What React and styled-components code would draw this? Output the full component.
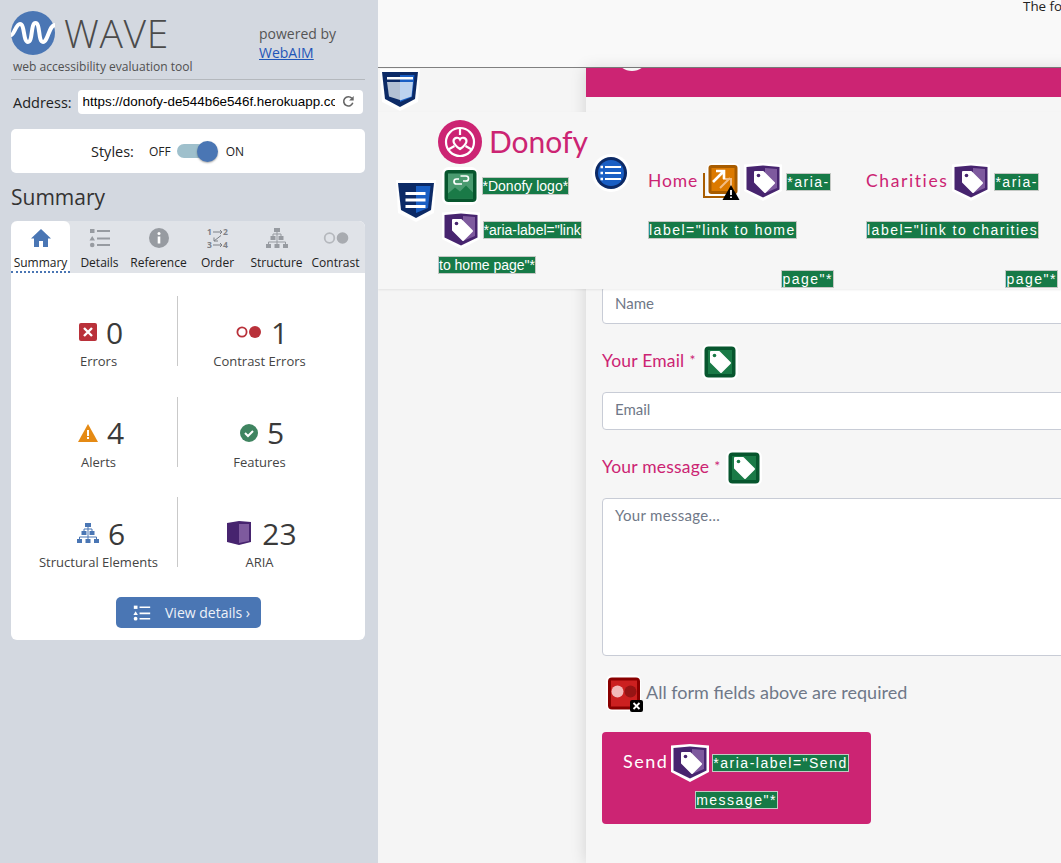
import React from "react";
import styled, { createGlobalStyle } from "styled-components";

const GlobalStyle = createGlobalStyle`
  html, body { margin: 0; padding: 0; height: 100%; overflow: hidden; }
  body { font-family: "Open Sans", sans-serif; background: #f5f5f5; }
  * { box-sizing: border-box; }
`;

const Page = styled.div`
  display: flex;
  width: 1061px;
  height: 863px;
  overflow: hidden;
`;

/* ---------- sidebar ---------- */
const Sidebar = styled.aside`
  width: 378px;
  flex: none;
  background: #d3d8e0;
  padding: 11px 13px 0 11px;
  color: #3c3c3c;
`;
const Head = styled.div`
  display: flex;
  height: 69px;
  border-bottom: 1px solid #b4b8bd;
`;
const Brand = styled.div`
  width: 248px;
`;
const LogoRow = styled.div`
  display: flex;
  align-items: center;
  gap: 9px;
  height: 44px;
`;
const WaveWord = styled.span`
  font-size: 39px;
  font-weight: 300;
  line-height: 46px;
  color: #4b4b4b;
  letter-spacing: 0.7px;
`;
const Tagline = styled.div`
  font-size: 12.05px;
  line-height: 17px;
  margin: 3px 0 0 2px;
  color: #505050;
  white-space: nowrap;
`;
const Powered = styled.div`
  font-size: 14px;
  line-height: 19px;
  padding-top: 13px;
  color: #555;
`;
const WebLink = styled.a`
  display: block;
  color: #1f55b8;
  text-decoration: underline;
`;
const AddressRow = styled.div`
  display: flex;
  align-items: center;
  height: 24px;
  margin-top: 10px;
  padding-left: 2px;
  font-size: 14.5px;
  color: #222;
`;
const AddressBox = styled.div`
  margin-left: 6px;
  width: 285px;
  height: 24px;
  background: #fff;
  border-radius: 4px;
  padding: 0 8px 2px 5px;
  display: flex;
  align-items: center;
  justify-content: space-between;
  font-family: "Liberation Sans", sans-serif;
  font-size: 13.4px;
  color: #000;
`;
const AddressText = styled.span`
  width: 252px;
  overflow: hidden;
  white-space: nowrap;
`;
const StylesBox = styled.div`
  height: 44px;
  margin-top: 15px;
  background: #fff;
  border-radius: 5px;
  display: flex;
  align-items: center;
  padding-left: 80px;
  color: #222;
  font-size: 14.5px;
`;
const SmallLabel = styled.span`
  font-size: 12px;
  margin-left: ${(p) => p.$left}px;
`;
const Track = styled.div`
  position: relative;
  width: 28px;
  height: 14px;
  margin-left: 6px;
  background: #9fc0cc;
  border-radius: 7px;
`;
const Knob = styled.div`
  position: absolute;
  left: 20px;
  top: -3.5px;
  width: 21px;
  height: 21px;
  border-radius: 50%;
  background: #4a76b4;
  box-shadow: 0 1px 2px rgba(0, 0, 0, 0.35);
`;
const SummaryTitle = styled.h2`
  margin: 10px 0 9px;
  font-size: 21px;
  line-height: 29px;
  font-weight: 400;
  color: #333;
`;
const Panel = styled.section`
  height: 419px;
  background: #fff;
  border-radius: 6px;
  overflow: hidden;
`;
const Tabs = styled.div`
  display: grid;
  grid-template-columns: repeat(6, 59px);
  height: 52px;
  background: #e0e3e8;
`;
const Tab = styled.div`
  display: flex;
  flex-direction: column;
  align-items: center;
  padding-top: 5px;
  height: 52px;
  font-size: 12px;
  white-space: nowrap;
  color: #222;
  background: ${(p) => (p.$active ? "#fff" : "transparent")};
  border-radius: ${(p) => (p.$active ? "6px 6px 0 0" : "0")};
  border-bottom: ${(p) => (p.$active ? "2px dotted #4a76b4" : "none")};
  svg { height: 24px; flex: none; }
  span { margin-top: 5px; line-height: 16px; }
`;
const Stats = styled.div`
  display: grid;
  grid-template-columns: 167px 1fr;
  grid-auto-rows: 70px;
  row-gap: 30.5px;
  margin: 23px 24px 0 0;
`;
const Stat = styled.div`
  display: flex;
  flex-direction: column;
  align-items: center;
  justify-content: flex-end;
  padding-left: ${(p) => (p.$first ? "9px" : "0")};
  border-right: ${(p) => (p.$first ? "1px solid #c9c9c9" : "none")};
`;
const StatTop = styled.div`
  display: flex;
  align-items: center;
  gap: ${(p) => p.$gap || 9}px;
  height: 36px;
  padding-left: 5px;
  font-size: 30px;
  color: #3a3a3a;
`;
const StatLabel = styled.div`
  font-size: 13px;
  line-height: 17px;
  margin-bottom: -4px;
  margin-top: 3px;
  color: #444;
  white-space: nowrap;
`;
const DetailsButton = styled.div`
  display: flex;
  align-items: center;
  width: 145px;
  height: 31px;
  margin: 30px 0 0 105px;
  padding-left: 17px;
  gap: 14px;
  background: #4a76b4;
  border-radius: 5px;
  color: #eef2f8;
  font-size: 14px;
  white-space: nowrap;
`;

/* ---------- page under test ---------- */
const Main = styled.main`
  position: relative;
  flex: 1;
  min-width: 0;
  overflow: hidden;
  background: #f5f5f5;
`;
const TopBar = styled.div`
  height: 68px;
  background: #f9f9f9;
  border-bottom: 1px solid #808080;
  padding-left: 645px;
  font-size: 13.4px;
  line-height: 13px;
  white-space: nowrap;
  color: #222;
`;
const Card = styled.div`
  margin-left: 208px;
  width: 700px;
  min-height: 795px;
  background: #f6f6f6;
  box-shadow: -1px 0 14px rgba(0, 0, 0, 0.13);
`;
const PinkBar = styled.div`
  position: relative;
  height: 29px;
  background: #cc2473;
  overflow: hidden;
`;
const BarDot = styled.div`
  position: absolute;
  left: 32px;
  top: -19px;
  width: 28px;
  height: 22px;
  border-radius: 50%;
  background: #f6f6f6;
`;
const Form = styled.div`
  padding: 141px 0 0 16px;
  font-family: Lato, sans-serif;
`;
const LabelRow = styled.div`
  display: flex;
  align-items: center;
  gap: 6px;
  height: 36px;
  margin-bottom: 12px;
  font-size: 17.5px;
  letter-spacing: 0.2px;
  color: #cc2473;
  em { font-style: normal; padding-bottom: 4px; }
  sup { font-size: 14px; margin: -5px 0 0 -1px; }
`;
const Input = styled.div`
  width: 640px;
  height: ${(p) => p.$height || 38}px;
  margin-bottom: 20px;
  padding: ${(p) => (p.$area ? "7px 12px" : "0 12px 4px")};
  display: flex;
  align-items: ${(p) => (p.$area ? "flex-start" : "center")};
  background: #fff;
  border: 1px solid #c8ccd6;
  border-radius: 4px;
  font-size: 15px;
  letter-spacing: ${(p) => (p.$area ? "0.3px" : "0")};
  color: #6f7888;
`;
const RequiredRow = styled.div`
  display: flex;
  align-items: center;
  gap: 2px;
  height: 36px;
  margin: 0 0 20px 4px;
  font-size: 18px;
  color: #6f7888;
  em { font-style: normal; padding-bottom: 4px; }
`;
const SendButton = styled.div`
  width: 269px;
  height: 92px;
  background: #cc2473;
  border-radius: 4px;
  color: #fff;
  font-size: 18px;
  letter-spacing: 1.5px;
  padding-top: 12px;
  em { font-style: normal; padding-bottom: 4px; }
`;
const SendTop = styled.div`
  display: flex;
  align-items: center;
  gap: 3px;
  padding-left: 21px;
  height: 38px;
`;
const SendBottom = styled.div`
  margin-top: 9px;
  text-align: center;
  line-height: 0;
`;

/* overlays from the misplaced nav */
const StrayShield = styled.div`
  position: absolute;
  left: 2px;
  top: 69px;
  line-height: 0;
`;
const Nav = styled.nav`
  position: absolute;
  left: 0;
  right: 0;
  top: 112px;
  height: 177px;
  display: flex;
  background: #f6f6f6;
  box-shadow: 0 1px 2px rgba(0, 0, 0, 0.08);
  font-family: Lato, sans-serif;
`;
const NavShield = styled.div`
  margin: 68px 0 0 18px;
  line-height: 0;
`;
const BrandCol = styled.div`
  width: 154px;
  flex: none;
  margin-left: 2px;
  padding-top: 8px;
`;
const DonofyRow = styled.div`
  display: flex;
  align-items: center;
  gap: 7px;
  height: 44px;
`;
const DonofyWord = styled.span`
  font-size: 30px;
  line-height: 42px;
  padding-bottom: 2px;
  color: #cc2473;
`;
const BrandLine = styled.div`
  display: flex;
  align-items: center;
  gap: ${(p) => p.$gap}px;
  padding-left: 3.5px;
  height: ${(p) => p.$height}px;
  margin-top: ${(p) => p.$top}px;
  line-height: 0;
`;
const Hilite = styled.span`
  display: inline-block;
  background: #167a47;
  color: #fff;
  border: 1px solid #c4c8c4;
  font-family: "Liberation Sans", sans-serif;
  font-size: 14px;
  line-height: 16px;
  white-space: nowrap;
  letter-spacing: ${(p) => (p.$wide ? "1.5px" : "0")};
`;
const BrandTail = styled.div`
  margin-top: 7px;
  line-height: 0;
`;
const ListIcon = styled.div`
  margin: 42px 0 0 0;
  line-height: 0;
  width: 56px;
  flex: none;
`;
const LinkCol = styled.div`
  width: ${(p) => p.$width}px;
  padding-right: ${(p) => p.$pad}px;
  flex: none;
  font-size: 17.5px;
  color: #cc2473;
`;
const LinkTop = styled.div`
  display: flex;
  align-items: center;
  gap: 4px;
  height: 40px;
  margin-top: 50px;
`;
const LinkWord = styled.span`
  padding-bottom: 3px;
  letter-spacing: ${(p) => p.$spacing}px;
`;
const LinkLine = styled.div`
  display: flex;
  justify-content: ${(p) => (p.$end ? "flex-end" : "flex-start")};
  margin-top: ${(p) => p.$top}px;
  line-height: 0;
`;

/* ---------- drawings ---------- */
const WaveLogo = () => (
  <svg width="44" height="44" viewBox="0 0 44 44">
    <circle cx="22" cy="22" r="22" fill="#4a76b4" />
    <path d="M0 24C3 24 5 13 9 13c5 0 3 18 8 18s2.500-19 7.500-19 2.500 19 7.500 19c5 0 6-17 12-17" fill="none" stroke="#fff" strokeWidth="4" />
  </svg>
);
const ReloadIcon = () => (
  <svg width="13" height="13" viewBox="0 0 14 14">
    <path d="M11.600 8.400A5 5 0 1 1 10.600 3.500" fill="none" stroke="#666" strokeWidth="1.700" />
    <path d="M12.600 1v5h-5z" fill="#666" />
  </svg>
);
const HomeIcon = () => (
  <svg width="22" height="24" viewBox="0 0 22 24">
    <path d="M11 3 1 12.500h3V21h5v-6h4v6h5v-8.500h3z" fill="#4a76b4" />
  </svg>
);
const ListGlyph = ({ color = "#979ba1", w = 22 }) => (
  <svg width={w} height="24" viewBox="0 0 22 24">
    <rect x="1" y="3" width="4.500" height="4" fill={color} />
    <path d="M3.200 10 6 14.500H.5z" fill={color} />
    <circle cx="3.200" cy="19" r="2.300" fill={color} />
    <path d="M8 5h13M8 12.500h13M8 19h13" stroke={color} strokeWidth="2" />
  </svg>
);
const InfoIcon = () => (
  <svg width="22" height="24" viewBox="0 0 22 24">
    <circle cx="11" cy="12" r="10" fill="#979ba1" />
    <circle cx="11" cy="7.500" r="1.500" fill="#fff" />
    <rect x="9.700" y="10.500" width="2.600" height="7" fill="#fff" />
  </svg>
);
const OrderIcon = () => (
  <svg width="22" height="24" viewBox="0 0 22 24" fontFamily="Open Sans" fontSize="8.500" fontWeight="700" fill="#7d8086">
    <text x="0" y="9">1</text>
    <text x="16" y="9">2</text>
    <text x="0" y="22">3</text>
    <text x="16" y="22">4</text>
    <path d="M6 6h9M13 4l2 2-2 2M6 19h9M13 17l2 2-2 2M14 9.500l-7 5.500M7 11.500V15h4" fill="none" stroke="#7d8086" strokeWidth="1" />
  </svg>
);
const TreeIcon = ({ color = "#979ba1", size = 22 }) => (
  <svg width={size} height={size + 2} viewBox="0 0 22 24" fill={color}>
    <rect x="8" y="2" width="6" height="4" />
    <rect x="4.500" y="10" width="5" height="4" />
    <rect x="12.500" y="10" width="5" height="4" />
    <rect x="0" y="18" width="5" height="4" />
    <rect x="8.500" y="18" width="5" height="4" />
    <rect x="17" y="18" width="5" height="4" />
    <path d="M11 6v12M7 10V8h8v2M2.500 18v-2h17v2" fill="none" stroke={color} strokeWidth="1" />
  </svg>
);
const ContrastTabIcon = () => (
  <svg width="26" height="24" viewBox="0 0 26 24">
    <circle cx="6.500" cy="12" r="4.800" fill="none" stroke="#b5b8bd" strokeWidth="1.800" />
    <circle cx="19.500" cy="12" r="5.800" fill="#a8abb0" />
  </svg>
);
const ErrorIcon = () => (
  <svg width="18" height="18" viewBox="0 0 18 18">
    <rect width="18" height="18" rx="2" fill="#b9313a" />
    <path d="M5 5l8 8M13 5l-8 8" stroke="#fff" strokeWidth="2.400" />
  </svg>
);
const ContrastIcon = () => (
  <svg width="26" height="14" viewBox="0 0 26 14">
    <circle cx="6" cy="7" r="4.600" fill="none" stroke="#b9313a" strokeWidth="1.800" />
    <circle cx="19" cy="7" r="6" fill="#b9313a" />
  </svg>
);
const AlertIcon = () => (
  <svg width="20" height="18" viewBox="0 0 20 18">
    <path d="M10 0 20 18H0z" fill="#e58a14" />
    <rect x="9" y="6" width="2" height="6" fill="#fff" />
    <rect x="9" y="13" width="2" height="2" fill="#fff" />
  </svg>
);
const FeatureIcon = () => (
  <svg width="18" height="18" viewBox="0 0 18 18">
    <circle cx="9" cy="9" r="9" fill="#3f8460" />
    <path d="M5 9l3 3 5-5" fill="none" stroke="#fff" strokeWidth="2" />
  </svg>
);
const AriaIcon = () => (
  <svg width="24" height="24" viewBox="0 0 24 24">
    <path d="M0 2 12 0l12 1v20l-12 3-12-3z" fill="#47246f" />
    <path d="M12 3h10v17l-10 2z" fill="#7e5a9e" />
  </svg>
);

const Tag = ({ dot, dx = 0, dy = 0 }) => (
  <g transform={`translate(${dx} ${dy})`}>
    <path d="M11 9h8l11 11-9 9-10-10z" fill="#fff" stroke="#fff" strokeWidth="2" strokeLinejoin="round" />
    <circle cx="14.500" cy="12.500" r="1.800" fill={dot} />
  </g>
);
const PurpleBadge = () => (
  <svg width="38" height="38" viewBox="0 0 38 38">
    <path d="M19 0 38 1.500V28l-19 10L0 28V1.500z" fill="#fff" />
    <path d="M19 2.500 35.500 4v22.500L19 34.500 2.500 26.500V4z" fill="#47246f" />
    <path d="M21 5 33 6v19l-12 5z" fill="#7e5a9e" />
    <Tag dot="#47246f" />
  </svg>
);
const GreenTag = () => (
  <svg width="36" height="36" viewBox="0 0 36 36">
    <rect width="36" height="36" rx="7" fill="#fff" />
    <rect x="2.500" y="2.500" width="31" height="31" rx="4" fill="#07562e" />
    <rect x="6" y="6" width="24" height="24" fill="#1a7a47" />
    <Tag dot="#1a7a47" dx={-2} dy={-1} />
  </svg>
);
const GreenImage = () => (
  <svg width="36" height="38" viewBox="0 0 36 38">
    <rect width="36" height="38" rx="7" fill="#fff" />
    <rect x="2.500" y="3" width="32" height="32" rx="4" fill="#07562e" />
    <rect x="6" y="6.500" width="25" height="25" fill="#4a9b70" />
    <path d="M6 31.500v-5l7-6 5 4 6-6 7 7v6z" fill="#1a7a47" />
    <path d="M16 13h-2.500a2.400 2.400 0 0 0 0 5H19M20 15h3a2.400 2.400 0 0 0 0-5h-5.500" fill="none" stroke="#fff" strokeWidth="1.700" transform="translate(1 -1)" />
  </svg>
);
const BlueShield = ({ windowed }) => (
  <svg width="40" height="42" viewBox="0 0 40 42">
    <path d="M0 0h40l-2 33-18 9-18-9z" fill="#fff" />
    <path d="M2 3h36l-3 27-15 8-15-8z" fill="#0c2a66" />
    <path d="M20 6h14.500l-2.500 22-12 5z" fill="#1a5fc4" />
    {windowed ? (
      <>
        <path d="M7 13h13v18l-11-3.500z" fill="#b4c1d3" />
        <path d="M20 13h13l-1.500 14.500-11.500 4z" fill="#bdd3ef" />
        <rect x="7" y="8" width="26" height="2.500" fill="#fff" />
      </>
    ) : (
      <path d="M9.500 12h20v3h-20zM9.500 18.500h20v3h-20zM9.500 25h20v3h-20z" fill="#fff" />
    )}
  </svg>
);
const ListBadge = () => (
  <svg width="38" height="38" viewBox="0 0 38 38">
    <circle cx="19" cy="19" r="19" fill="#fff" />
    <circle cx="19" cy="19" r="16" fill="#0c2a66" />
    <circle cx="19" cy="19" r="13" fill="#1a5fc4" />
    <path d="M13 13h16M13 19h16M13 25h16" stroke="#fff" strokeWidth="2.200" />
    <path d="M8.500 13h2.500M8.500 19h2.500M8.500 25h2.500" stroke="#fff" strokeWidth="2.600" />
  </svg>
);
const DonofyLogo = () => (
  <svg width="44" height="44" viewBox="0 0 44 44">
    <circle cx="22" cy="22" r="22" fill="#cc2473" />
    <circle cx="22" cy="22" r="14" fill="none" stroke="#fff" strokeWidth="2.200" />
    <path d="M22 8v7M9.500 30l7-4M34.500 30l-7-4" stroke="#fff" strokeWidth="2.200" />
    <path d="M22 29c-3-2-6.500-4.500-6.500-8a3.500 3.500 0 0 1 6.500-1.500A3.500 3.500 0 0 1 28.500 21c0 3.500-3.500 6-6.500 8z" fill="none" stroke="#fff" strokeWidth="2.200" />
  </svg>
);
const OrangeBadge = () => (
  <svg width="38" height="38" viewBox="0 0 38 38">
    <rect x="5" y="0" width="33" height="36" rx="6" fill="#fff" />
    <path d="M2 10v24h26" fill="none" stroke="#a85c00" strokeWidth="2" />
    <rect x="6.500" y="2" width="29" height="29" rx="3" fill="#a85c00" />
    <rect x="9.500" y="5" width="23" height="23" fill="#dc7a00" />
    <path d="M20 18l10-10M23 9h8v8" fill="none" stroke="#f2bd85" strokeWidth="2" transform="translate(-2 7)" />
    <path d="M11 19l10-10M14 8h8v8" fill="none" stroke="#fff" strokeWidth="2.600" />
    <path d="M29 22l8.500 15h-17z" fill="#000" />
    <path d="M29 27v5M29 33.500v1.500" stroke="#fff" strokeWidth="1.800" />
  </svg>
);
const RedBadge = () => (
  <svg width="38" height="38" viewBox="0 0 38 38">
    <rect width="35" height="36" rx="6" fill="#fff" />
    <rect x="2" y="2.500" width="32" height="32" rx="4" fill="#8a0000" />
    <rect x="5" y="5.500" width="26" height="26" fill="#cc2020" />
    <circle cx="11.500" cy="16.500" r="6" fill="#f2b9b9" />
    <circle cx="24.500" cy="16.500" r="6" fill="#961414" />
    <rect x="24" y="25" width="13" height="12" rx="2" fill="#000" />
    <path d="M27.500 28l6 6M33.500 28l-6 6" stroke="#fff" strokeWidth="1.800" />
  </svg>
);

const tabs = [
  { name: "Summary", icon: <HomeIcon />, active: true },
  { name: "Details", icon: <ListGlyph /> },
  { name: "Reference", icon: <InfoIcon /> },
  { name: "Order", icon: <OrderIcon /> },
  { name: "Structure", icon: <TreeIcon /> },
  { name: "Contrast", icon: <ContrastTabIcon /> },
];

const stats = [
  { icon: <ErrorIcon />, value: "0", label: "Errors" },
  { icon: <ContrastIcon />, value: "1", label: "Contrast Errors" },
  { icon: <AlertIcon />, value: "4", label: "Alerts" },
  { icon: <FeatureIcon />, value: "5", label: "Features" },
  { icon: <TreeIcon color="#4a76b4" />, value: "6", label: "Structural Elements" },
  { icon: <AriaIcon />, value: "23", label: "ARIA", gap: 11 },
];

export default function App() {
  return (
    <Page>
      <GlobalStyle />
      <Sidebar>
        <Head>
          <Brand>
            <LogoRow>
              <WaveLogo />
              <WaveWord>WAVE</WaveWord>
            </LogoRow>
            <Tagline>web accessibility evaluation tool</Tagline>
          </Brand>
          <Powered>
            powered by
            <WebLink>WebAIM</WebLink>
          </Powered>
        </Head>
        <AddressRow>
          Address:
          <AddressBox>
            <AddressText>https://donofy-de544b6e546f.herokuapp.com/contact</AddressText>
            <ReloadIcon />
          </AddressBox>
        </AddressRow>
        <StylesBox>
          Styles:
          <SmallLabel $left={15}>OFF</SmallLabel>
          <Track>
            <Knob />
          </Track>
          <SmallLabel $left={21}>ON</SmallLabel>
        </StylesBox>
        <SummaryTitle>Summary</SummaryTitle>
        <Panel>
          <Tabs>
            {tabs.map((t) => (
              <Tab key={t.name} $active={t.active}>
                {t.icon}
                <span>{t.name}</span>
              </Tab>
            ))}
          </Tabs>
          <Stats>
            {stats.map((s, i) => (
              <Stat key={s.label} $first={i % 2 === 0}>
                <StatTop $gap={s.gap}>
                  {s.icon}
                  {s.value}
                </StatTop>
                <StatLabel>{s.label}</StatLabel>
              </Stat>
            ))}
          </Stats>
          <DetailsButton>
            <ListGlyph color="#fff" w={18} />
            View details ›
          </DetailsButton>
        </Panel>
      </Sidebar>

      <Main>
        <TopBar>The following form lets you get in touch</TopBar>
        <Card>
          <PinkBar>
            <BarDot />
          </PinkBar>
          <Form>
            <LabelRow>
              <em>Your Name</em> <sup>*</sup>
            </LabelRow>
            <Input>Name</Input>
            <LabelRow>
              <em>Your Email</em> <sup>*</sup>
              <GreenTag />
            </LabelRow>
            <Input>Email</Input>
            <LabelRow>
              <em>Your message</em> <sup>*</sup>
              <GreenTag />
            </LabelRow>
            <Input $area $height={158}>Your message…</Input>
            <RequiredRow>
              <RedBadge />
              <em>All form fields above are required</em>
            </RequiredRow>
            <SendButton>
              <SendTop>
                <em>Send</em>
                <PurpleBadge />
                <Hilite $wide>*aria-label="Send</Hilite>
              </SendTop>
              <SendBottom>
                <Hilite $wide>message"*</Hilite>
              </SendBottom>
            </SendButton>
          </Form>
        </Card>

        <StrayShield>
          <BlueShield windowed />
        </StrayShield>
        <Nav>
          <NavShield>
            <BlueShield />
          </NavShield>
          <BrandCol>
            <DonofyRow>
              <DonofyLogo />
              <DonofyWord>Donofy</DonofyWord>
            </DonofyRow>
            <BrandLine $height={40} $top={2} $gap={4}>
              <GreenImage />
              <Hilite>*Donofy logo*</Hilite>
            </BrandLine>
            <BrandLine $height={38} $top={5} $gap={3}>
              <PurpleBadge />
              <Hilite>*aria-label="link</Hilite>
            </BrandLine>
            <BrandTail>
              <Hilite>to home page"*</Hilite>
            </BrandTail>
          </BrandCol>
          <ListIcon>
            <ListBadge />
          </ListIcon>
          <LinkCol $width={218} $pad={32}>
            <LinkTop>
              <LinkWord $spacing={0.9}>Home</LinkWord>
              <OrangeBadge />
              <PurpleBadge />
              <Hilite $wide>*aria-</Hilite>
            </LinkTop>
            <LinkLine $top={19}>
              <Hilite $wide>label="link to home</Hilite>
            </LinkLine>
            <LinkLine $top={31} $end>
              <Hilite $wide>page"*</Hilite>
            </LinkLine>
          </LinkCol>
          <LinkCol $width={195} $pad={3}>
            <LinkTop>
              <LinkWord $spacing={1.6}>Charities</LinkWord>
              <PurpleBadge />
              <Hilite $wide>*aria-</Hilite>
            </LinkTop>
            <LinkLine $top={19}>
              <Hilite $wide>label="link to charities</Hilite>
            </LinkLine>
            <LinkLine $top={31} $end>
              <Hilite $wide>page"*</Hilite>
            </LinkLine>
          </LinkCol>
        </Nav>
      </Main>
    </Page>
  );
}
